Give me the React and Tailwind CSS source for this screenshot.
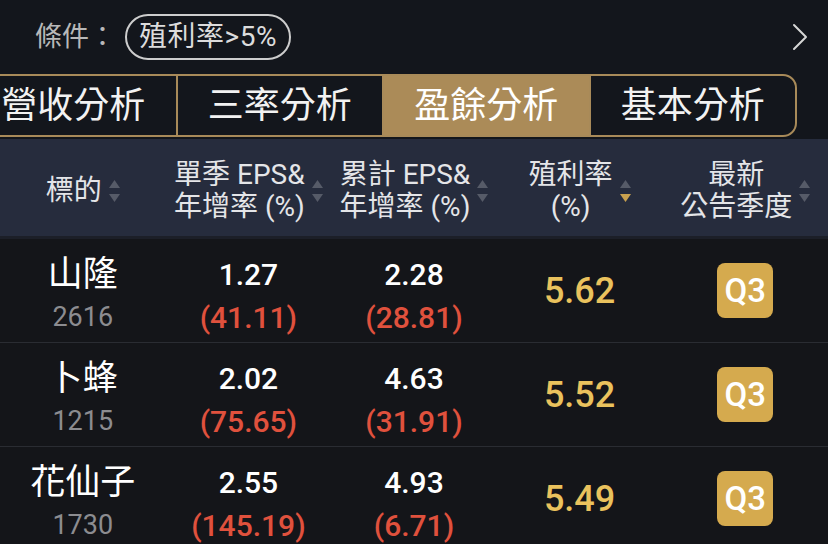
import React from "react";

const tabs = ["營收分析", "三率分析", "盈餘分析", "基本分析"];

const rows = [
  { name: "山隆", code: "2616", q: "1.27", qy: "(41.11)", c: "2.28", cy: "(28.81)", y: "5.62" },
  { name: "卜蜂", code: "1215", q: "2.02", qy: "(75.65)", c: "4.63", cy: "(31.91)", y: "5.52" },
  { name: "花仙子", code: "1730", q: "2.55", qy: "(145.19)", c: "4.93", cy: "(6.71)", y: "5.49" },
];

const Sort = ({ down }) => (
  <div className="flex flex-col gap-[6px]">
    <svg width="11" height="8" viewBox="0 0 11 8">
      <path d="M5.5 0L11 8H0z" fill="#565b68" />
    </svg>
    <svg width="11" height="8" viewBox="0 0 11 8">
      <path d="M0 0H11L5.5 8z" fill={down ? "#c9a14f" : "#565b68"} />
    </svg>
  </div>
);

const Head = ({ children, down }) => (
  <div className="flex items-center justify-center gap-[7px]">
    <div className="text-center text-[28px] leading-[32px] text-[#e4e5e8]">{children}</div>
    <Sort down={down} />
  </div>
);

export default function App() {
  return (
    <div className="w-[828px] h-[544px] overflow-hidden bg-[#141519] text-white font-['Roboto','Noto_Sans_CJK_TC',sans-serif]">
      {/* condition bar */}
      <div className="h-[74px] flex items-center pl-[35px] pr-[20px] bg-[#13161c]">
        <span className="text-[27px] text-[#b8b8b8]">條件：</span>
        <span className="ml-[9px] h-[46px] px-[12px] flex items-center rounded-full border-2 border-[#cdcdcd] text-[28px] tracking-[0.5px] text-[#dcdcdc]">
          殖利率&gt;5%
        </span>
        <svg className="ml-auto" width="16" height="28" viewBox="0 0 16 28">
          <polyline points="2,2 14,14 2,26" fill="none" stroke="#d6d6d6" strokeWidth="2" strokeLinecap="round" strokeLinejoin="round" />
        </svg>
      </div>

      {/* tabs */}
      <div className="bg-[#13161c] pb-[2px]">
        <div className="-ml-[31px] w-[828px] h-[63px] flex border-2 border-[#a88a59] rounded-[14px] overflow-hidden">
          {tabs.map((t, i) => (
            <div
              key={t}
              className={
                "flex-1 flex items-center justify-center text-[36px] " +
                (i > 0 ? "border-l-2 border-[#a88a59] " : "") +
                (i === 2 ? "bg-[#ab8b58] text-white" : "text-[#f2f2f2]")
              }
            >
              {t}
            </div>
          ))}
        </div>
      </div>

      {/* header */}
      <div className="h-[100px] pt-[6px] grid grid-cols-5 items-center bg-[#262c3d] border-b-[3px] border-[#1c1f28]">
        <Head>標的</Head>
        <Head>
          單季 EPS&amp;
          <br />
          年增率 (%)
        </Head>
        <Head>
          累計 EPS&amp;
          <br />
          年增率 (%)
        </Head>
        <Head down>
          殖利率
          <br />
          (%)
        </Head>
        <Head>
          最新
          <br />
          公告季度
        </Head>
      </div>

      {/* rows */}
      {rows.map((r) => (
        <div key={r.code} className="h-[104px] grid grid-cols-5 items-center border-b border-[#2a2c32]">
          <div className="flex flex-col items-center pt-[10px]">
            <span className="text-[35px] leading-[43px]">{r.name}</span>
            <span className="text-[27px] leading-[43px] text-[#8c8c90]">{r.code}</span>
          </div>
          <div className="flex flex-col items-center pt-[10px] font-medium">
            <span className="text-[30px] leading-[43px]">{r.q}</span>
            <span className="text-[30px] leading-[43px] text-[#e0513d]">{r.qy}</span>
          </div>
          <div className="flex flex-col items-center pt-[10px] font-medium">
            <span className="text-[30px] leading-[43px]">{r.c}</span>
            <span className="text-[30px] leading-[43px] text-[#e0513d]">{r.cy}</span>
          </div>
          <div className="flex justify-center">
            <span className="text-[36px] font-medium text-[#eac25d]">{r.y}</span>
          </div>
          <div className="flex justify-center">
            <span className="w-[56px] h-[55px] rounded-[8px] bg-[#d5aa4e] flex items-center justify-center text-[33px] font-medium text-white">
              Q3
            </span>
          </div>
        </div>
      ))}
    </div>
  );
}
